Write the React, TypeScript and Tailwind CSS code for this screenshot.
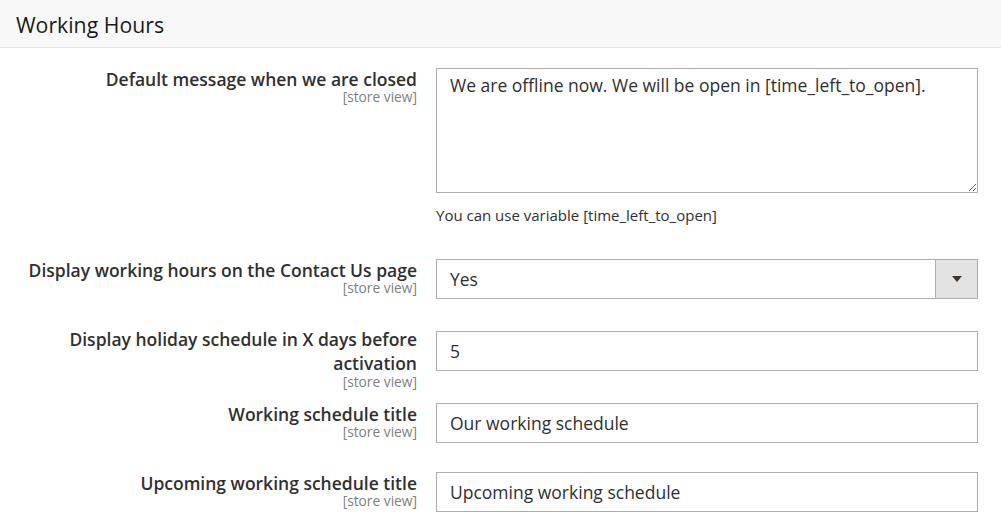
import { ReactNode } from "react";

type RowProps = {
  label: ReactNode;
  children: ReactNode;
  className?: string;
  labelClass?: string;
  lineClass?: string;
};

// one config row: right-aligned label column + field column
const Row = ({
  label,
  children,
  className = "",
  labelClass = "",
  lineClass = "leading-[22px]",
}: RowProps) => {
  return (
    <div className={`flex ${className}`}>
      <div className={`w-[417px] shrink-0 text-right ${labelClass}`}>
        <div className={`text-[17.5px] font-semibold text-[#303030] ${lineClass}`}>{label}</div>
        <div className="text-[13.75px] leading-[13px] text-[#808080]">[store view]</div>
      </div>
      <div className="ml-[19px] w-[542px]">{children}</div>
    </div>
  );
};

const inputClass =
  "block w-full h-[40px] border border-[#adadad] bg-white px-[13px] text-[17.5px] text-[#303030] outline-none";

export default function App() {
  return (
    <div
      className="w-[1001px] h-[523px] bg-white overflow-hidden"
      style={{ fontFamily: '"Open Sans", sans-serif' }}
    >
      {/* section header */}
      <header className="h-[48px] bg-[#f8f8f8] border-b border-[#e3e3e3] px-[16px] pt-[9px]">
        <h2 className="text-[21.25px] leading-[32px] text-[#1a1a1a]">Working Hours</h2>
      </header>

      {/* default message */}
      <Row label="Default message when we are closed" className="mt-[20px]">
        <textarea
          readOnly
          className="block w-full h-[125px] border border-[#adadad] bg-white px-[13px] pt-[4px] text-[17.5px] leading-[24px] text-[#303030] outline-none resize-y"
          defaultValue="We are offline now. We will be open in [time_left_to_open]."
        />
        <p className="mt-[12px] text-[15px] leading-[20px] text-[#303030]">
          You can use variable [time_left_to_open]
        </p>
      </Row>

      {/* display on contact page */}
      <Row label="Display working hours on the Contact Us page" className="mt-[34px]">
        <div className="flex h-[40px] border border-[#adadad] bg-white">
          <div className="flex-1 px-[13px] flex items-center text-[17.5px] text-[#303030]">Yes</div>
          <div className="w-[42px] bg-[#e3e3e3] border-l border-[#adadad] flex items-center justify-center">
            <svg width="10" height="6" viewBox="0 0 10 6">
              <path d="M0 0 L10 0 L5 6 Z" fill="#41362f" />
            </svg>
          </div>
        </div>
      </Row>

      {/* holiday days */}
      <Row
        label={
          <>
            Display holiday schedule in X days before
            <br />
            activation
          </>
        }
        className="mt-[32px]"
        labelClass="-mt-[4px]"
        lineClass="leading-[24px]"
      >
        <input readOnly className={inputClass} defaultValue="5" />
      </Row>

      <Row label="Working schedule title" className="mt-[15px]">
        <input readOnly className={inputClass} defaultValue="Our working schedule" />
      </Row>

      <Row label="Upcoming working schedule title" className="mt-[29px]">
        <input readOnly className={inputClass} defaultValue="Upcoming working schedule" />
      </Row>
    </div>
  );
}
